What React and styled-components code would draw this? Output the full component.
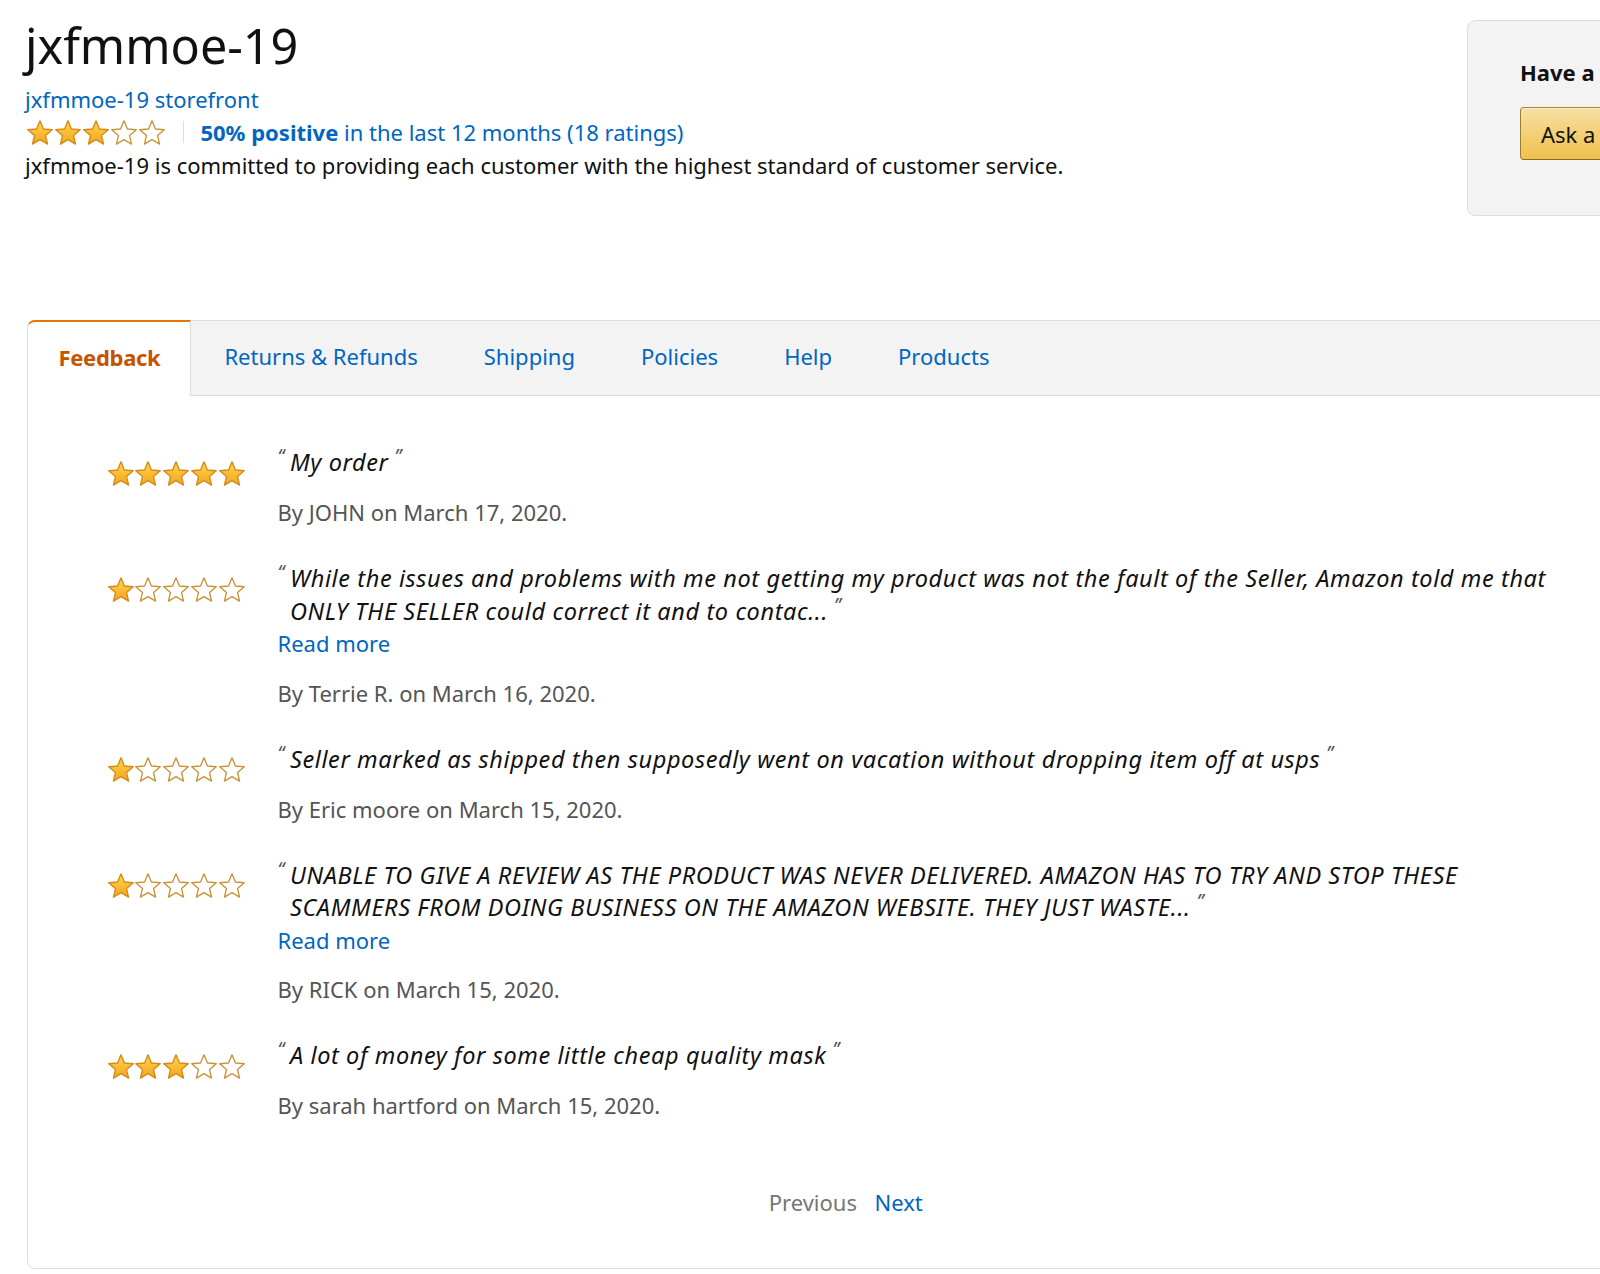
import React from "react";
import styled, { createGlobalStyle } from "styled-components";

const GlobalStyle = createGlobalStyle`
  html, body {
    margin: 0;
    overflow: hidden;
    background: #fff;
  }
  body {
    font-family: "Noto Sans", "Open Sans", Arial, sans-serif;
    font-size: 22px;
    color: #111;
  }
`;

const BLUE = "#0066c0";

const Page = styled.div`
  box-sizing: border-box;
  width: 1822px;
  padding: 0 25px;
`;

const Header = styled.header`
  display: grid;
  grid-template-columns: 1fr 330px;
  align-items: start;
`;

const SellerInfo = styled.div`
  display: flex;
  flex-direction: column;
`;

const SellerName = styled.h1`
  margin: 17px 0 0;
  font-size: 48.5px;
  font-weight: 400;
  line-height: 56px;
  color: #111;
`;

const Link = styled.a`
  color: ${BLUE};
  text-decoration: none;
  font-weight: ${(p) => (p.$bold ? 700 : 400)};
  cursor: pointer;
`;

const StoreLink = styled(Link)`
  margin-top: 9.5px;
  line-height: 33px;
`;

const RatingRow = styled.div`
  display: flex;
  align-items: center;
  height: 33px;
  margin-left: 2px;
`;

const Divider = styled.span`
  width: 1px;
  height: 22px;
  background: #ddd;
  margin: 0 16px 0 17px;
`;

const RatingText = styled.span`
  color: ${BLUE};
  line-height: 33px;
`;

const Description = styled.p`
  margin: 0;
  line-height: 33px;
`;

const QuestionBox = styled.aside`
  margin-top: 20px;
  height: 196px;
  box-sizing: border-box;
  padding: 35px 52px 0;
  background: #f3f3f3;
  border: 1px solid #ddd;
  border-radius: 8px;
  white-space: nowrap;
`;

const QuestionTitle = styled.h3`
  margin: 0;
  font-size: 22px;
  font-weight: 700;
  line-height: 32px;
`;

const AskButton = styled.button`
  margin-top: 19px;
  height: 53px;
  padding: 0 20px;
  font-family: inherit;
  font-size: 22px;
  color: #111;
  background: linear-gradient(to bottom, #f7dfa5, #f0c14b);
  border: 1px solid;
  border-color: #a88734 #9c7e31 #846a29;
  border-radius: 4px;
  box-shadow: inset 0 1px 0 rgba(255, 255, 255, 0.4);
`;

const Section = styled.section`
  margin: 104px 0 0 1.5px;
  width: 1638.5px;
  box-sizing: border-box;
  border: 1px solid #ddd;
  border-radius: 8px;
`;

const TabBar = styled.nav`
  display: flex;
  height: 75px;
  box-sizing: border-box;
  background: #f3f3f3;
  border-bottom: 1px solid #ddd;
  border-top-left-radius: 7px;
  border-top-right-radius: 7px;
`;

const Tab = styled.a`
  display: flex;
  align-items: center;
  padding: 0 33px 4px;
  color: ${BLUE};
  white-space: nowrap;
  cursor: pointer;

  ${(p) =>
    p.$active &&
    `
    margin: -1px 0 -1px -1px;
    padding: 0 30px 4px 31px;
    background: #fff;
    color: #c45500;
    font-weight: 700;
    letter-spacing: -0.3px;
    border-top: 2px solid #e77600;
    border-left: 1px solid #ddd;
    border-right: 1px solid #ddd;
    border-top-left-radius: 8px;
  `}
`;

const ReviewList = styled.div`
  display: flex;
  flex-direction: column;
  gap: 34px;
  padding: 50px 80px 0 80px;
`;

const Review = styled.article`
  display: grid;
  grid-template-columns: 138px 1fr;
  column-gap: 32px;
  align-items: start;
`;

const ReviewStars = styled.div`
  display: flex;
  margin-top: 14.5px;
`;

const ReviewBody = styled.div`
  display: flex;
  flex-direction: column;
`;

const Comment = styled.p`
  margin: 0;
  padding-left: 12.5px;
  text-indent: -12.5px;
  font-style: italic;
  font-size: 23.5px;
  letter-spacing: 0.6px;
  line-height: 32.5px;
  color: #111;
`;

const Quote = styled.span`
  display: inline-block;
  vertical-align: top;
  font-size: 19px;
  line-height: 20px;
  letter-spacing: 0;
  color: #555;
  text-indent: 0;
  width: ${(p) => (p.$open ? "12.5px" : "auto")};
  margin-left: ${(p) => (p.$open ? "0" : "6px")};
`;

const ReadMore = styled(Link)`
  line-height: 32px;
  align-self: flex-start;
`;

const Byline = styled.div`
  margin-top: 17.5px;
  line-height: 32px;
  color: #555;
`;

const Pager = styled.div`
  display: flex;
  justify-content: center;
  gap: 17.5px;
  margin-top: 64.5px;
  padding-bottom: 50px;
  line-height: 32px;
`;

const PagerDisabled = styled.span`
  color: #767676;
`;

const StarSvg = styled.svg`
  display: block;
  width: 26px;
  height: 25px;
  margin-right: 1.9px;
  flex: none;
`;

const STAR_POINTS =
  "12.5,1.3 15.56,8.59 23.44,9.25 17.45,14.41 19.26,22.1 12.5,18 5.74,22.1 7.55,14.41 1.56,9.25 9.44,8.59";

const Star = ({ filled }) => (
  <StarSvg viewBox="0.9 0.6 23.2 22.2">
    <defs>
      <linearGradient id="starGold" x1="0" y1="0" x2="0" y2="1">
        <stop offset="0" stopColor="#ffd54a" />
        <stop offset="1" stopColor="#f3a521" />
      </linearGradient>
    </defs>
    <polygon
      points={STAR_POINTS}
      fill={filled ? "url(#starGold)" : "#fff"}
      stroke={filled ? "#d48a19" : "#c99337"}
      strokeWidth="1.2"
      strokeLinejoin="round"
    />
  </StarSvg>
);

const Stars = ({ value }) =>
  [1, 2, 3, 4, 5].map((i) => <Star key={i} filled={i <= value} />);

const reviews = [
  { stars: 5, text: "My order", by: "JOHN", date: "March 17, 2020" },
  {
    stars: 1,
    text:
      "While the issues and problems with me not getting my product was not the fault of the Seller, Amazon told me that ONLY THE SELLER could correct it and to contac...",
    more: true,
    by: "Terrie R.",
    date: "March 16, 2020",
  },
  {
    stars: 1,
    text: "Seller marked as shipped then supposedly went on vacation without dropping item off at usps",
    by: "Eric moore",
    date: "March 15, 2020",
  },
  {
    stars: 1,
    text:
      "UNABLE TO GIVE A REVIEW AS THE PRODUCT WAS NEVER DELIVERED. AMAZON HAS TO TRY AND STOP THESE SCAMMERS FROM DOING BUSINESS ON THE AMAZON WEBSITE. THEY JUST WASTE...",
    more: true,
    by: "RICK",
    date: "March 15, 2020",
  },
  {
    stars: 3,
    text: "A lot of money for some little cheap quality mask",
    by: "sarah hartford",
    date: "March 15, 2020",
  },
];

const tabs = ["Feedback", "Returns & Refunds", "Shipping", "Policies", "Help", "Products"];

export default function App() {
  return (
    <Page>
      <GlobalStyle />
      <Header>
        <SellerInfo>
          <SellerName>jxfmmoe-19</SellerName>
          <StoreLink>jxfmmoe-19 storefront</StoreLink>
          <RatingRow>
            <Stars value={3} />
            <Divider />
            <RatingText>
              <Link $bold>50% positive</Link> in the last 12 months (18 ratings)
            </RatingText>
          </RatingRow>
          <Description>
            jxfmmoe-19 is committed to providing each customer with the highest standard of customer service.
          </Description>
        </SellerInfo>
        <QuestionBox>
          <QuestionTitle>Have a question for jxfmmoe-19?</QuestionTitle>
          <AskButton>Ask a question</AskButton>
        </QuestionBox>
      </Header>

      <Section>
        <TabBar>
          {tabs.map((t, i) => (
            <Tab key={t} $active={i === 0}>
              {t}
            </Tab>
          ))}
        </TabBar>
        <ReviewList>
          {reviews.map((r) => (
            <Review key={r.by}>
              <ReviewStars>
                <Stars value={r.stars} />
              </ReviewStars>
              <ReviewBody>
                <Comment>
                  <Quote $open>“</Quote>
                  {r.text}
                  <Quote>”</Quote>
                </Comment>
                {r.more && <ReadMore>Read more</ReadMore>}
                <Byline>
                  By {r.by} on {r.date}.
                </Byline>
              </ReviewBody>
            </Review>
          ))}
        </ReviewList>
        <Pager>
          <PagerDisabled>Previous</PagerDisabled>
          <Link>Next</Link>
        </Pager>
      </Section>
    </Page>
  );
}
